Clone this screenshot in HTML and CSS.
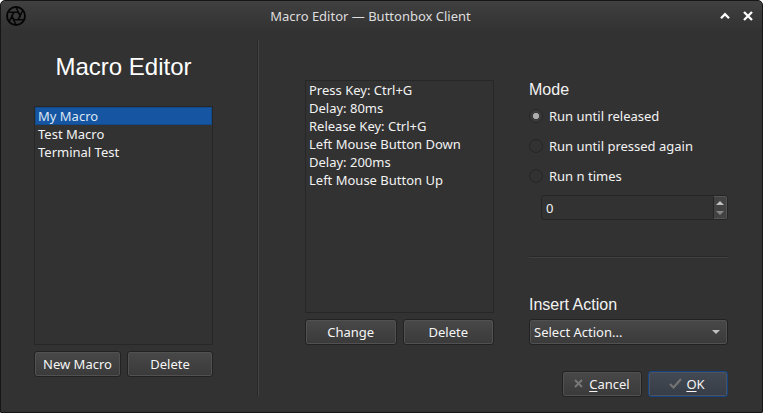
FILE: index.html
```html
<!DOCTYPE html>
<html lang="en">
<head>
<meta charset="utf-8">
<title>Macro Editor — Buttonbox Client</title>
<link rel="stylesheet" href="styles.css">
</head>
<body>
<div class="window">
  <header class="titlebar">
    <svg class="app-icon" viewBox="0 0 20 20" fill="none" stroke="#050505">
      <circle cx="10" cy="10" r="9" stroke-width="1.9"/>
      <path stroke-width="1.5" d="M8 6.2H12L14.3 10 12 13.8H8L5.7 10ZM12 6.2H3.2M14.3 10 10.2 1.5M12 13.8 16.7 4.5M8 13.8H16.8M5.7 10 9.8 18.5M8 6.2 3.3 15.5"/>
    </svg>
    <h1 class="window-title">Macro Editor — Buttonbox Client</h1>
    <div class="window-controls">
      <svg width="10" height="10" viewBox="0 0 10 10"><path d="M1 7.2 5 3.2 9 7.2"/></svg>
      <svg width="10" height="10" viewBox="0 0 10 10"><path d="M1 1 9 9M9 1 1 9"/></svg>
    </div>
  </header>
  <main class="content">
    <section class="macros">
      <h2 class="heading">Macro Editor</h2>
      <ul class="list">
        <li class="selected">My Macro</li>
        <li>Test Macro</li>
        <li>Terminal Test</li>
      </ul>
      <div class="buttons">
        <button class="button new">New Macro</button>
        <button class="button">Delete</button>
      </div>
    </section>
    <div class="divider"></div>
    <section class="actions">
      <ul class="list">
        <li>Press Key: Ctrl+G</li>
        <li>Delay: 80ms</li>
        <li>Release Key: Ctrl+G</li>
        <li>Left Mouse Button Down</li>
        <li>Delay: 200ms</li>
        <li>Left Mouse Button Up</li>
      </ul>
      <div class="buttons">
        <button class="button">Change</button>
        <button class="button">Delete</button>
      </div>
    </section>
    <section class="settings">
      <h3 class="subheading">Mode</h3>
      <div class="radios">
        <div class="radio"><span class="dot checked"></span>Run until released</div>
        <div class="radio"><span class="dot"></span>Run until pressed again</div>
        <div class="radio"><span class="dot"></span>Run n times</div>
      </div>
      <div class="spinbox">
        <span class="value">0</span>
        <div class="steppers">
          <svg width="8" height="4" viewBox="0 0 8 4"><path fill="#c0c0c0" d="M0 4 4 0 8 4Z"/></svg>
          <svg width="8" height="4" viewBox="0 0 8 4"><path fill="#858585" d="M0 0 4 4 8 0Z"/></svg>
        </div>
      </div>
      <div class="rule"></div>
      <h3 class="subheading">Insert Action</h3>
      <div class="button combo">Select Action...
        <svg width="8" height="4" viewBox="0 0 8 4"><path fill="#c0c0c0" d="M0 0 4 4 8 0Z"/></svg>
      </div>
      <div class="dialog-buttons">
        <button class="button"><svg width="9" height="9" viewBox="0 0 9 9"><path d="M1 1 8 8M8 1 1 8" fill="none" stroke="#777" stroke-width="2"/></svg><span><u>C</u>ancel</span></button>
        <button class="button primary"><svg width="13" height="11" viewBox="0 0 13 11"><path d="M1 6 4.5 9.5 12 1" fill="none" stroke="#737373" stroke-width="2.2"/></svg><span><u>O</u>K</span></button>
      </div>
    </section>
  </main>
</div>
</body>
</html>
```
FILE: styles.css
```css
* { box-sizing: border-box; }
body {
  margin: 0;
  background: #fff;
  color: #f2f2f2;
  font: 13px/18px "Noto Sans", sans-serif;
}
h1, h2, h3, ul { margin: 0; padding: 0; font-weight: 400; list-style: none; }
svg { display: block; flex: none; }
.window {
  width: 763px;
  height: 413px;
  border: 1px solid #161616;
  border-radius: 5px 5px 1px 1px;
  background: #323232 linear-gradient(#404040, #323232) no-repeat 0 0 / 100% 30px;
}
.titlebar {
  display: grid;
  grid-template-columns: 60px 1fr 60px;
  align-items: center;
  height: 30px;
}
.app-icon { width: 20px; height: 20px; margin: -1px 0 0 5px; }
.window-title {
  text-align: center;
  font-size: 13px;
  padding-right: 22px;
  color: #dedede;
}
.window-controls {
  display: flex;
  justify-content: flex-end;
  gap: 13px;
  padding-right: 9px;
}
.window-controls path { fill: none; stroke: #fcfcfc; stroke-width: 2.3; }
.content { display: flex; height: 381px; padding-left: 33px; }
.macros { width: 179px; padding-top: 18px; }
.heading {
  font: 24px/36px "Liberation Sans", sans-serif;
  text-align: center;
  color: #fff;
  margin-bottom: 21px;
}
.list { height: 239px; border: 1px solid #272727; }
.list li { height: 18px; padding-left: 3px; white-space: nowrap; }
.list .selected { background: #1655a2; color: #dce6f2; box-shadow: 0 0 0 1px #124989 inset; }
.buttons { display: flex; gap: 6px; margin-top: 6px; }
.buttons .button { flex: 1; }
.buttons .new { flex: 0 0 87px; }
.button {
  display: flex;
  align-items: center;
  justify-content: center;
  height: 26px;
  padding: 0 0 1px;
  border: 1px solid #222;
  border-radius: 3px;
  background: linear-gradient(#484848, #3a3a3a);
  box-shadow: inset 0 0 0 1px #515151;
  color: #f5f5f5;
  font: inherit;
}
.divider {
  width: 2px;
  height: 356px;
  margin: 9px 46px 0 44px;
  border-left: 1px solid #282828;
  border-right: 1px solid #444;
}
.actions { width: 189px; padding-top: 49px; }
.actions .list { height: 233px; }
.settings { width: 199px; margin-left: 35px; padding-top: 48px; }
.subheading { font: 16px/22px "Liberation Sans", sans-serif; }
.radios { display: grid; gap: 12px; margin-top: 6px; }
.radio { display: flex; align-items: center; gap: 6px; }
.dot {
  width: 14px;
  height: 14px;
  border: 1px solid #252525;
  border-radius: 50%;
}
.checked { background: radial-gradient(circle, #adadad 2.8px, #3a3a3a 3.5px); }
.spinbox {
  display: flex;
  height: 25px;
  margin: 10px 0 0 12px;
  border: 1px solid #252525;
  border-radius: 3px;
}
.value { flex: 1; padding: 3px 4px; }
.steppers {
  display: flex;
  flex-direction: column;
  align-items: center;
  justify-content: center;
  gap: 6px;
  width: 14px;
  border: 1px solid #555;
  border-left-color: #252525;
  border-radius: 0 2px 2px 0;
  background: #424242;
}
.rule { height: 2px; margin: 36px 0; border-top: 1px solid #282828; border-bottom: 1px solid #414141; }
.combo { justify-content: space-between; margin-top: 3px; padding: 0 7px 1px 4px; }
.dialog-buttons { display: flex; justify-content: flex-end; gap: 6px; margin-top: 26px; }
.dialog-buttons .button { width: 80px; gap: 6px; }
.dialog-buttons .primary { gap: 4px; padding-right: 2px; }
.primary { border-color: #164382; background: linear-gradient(#434a53, #363d46); box-shadow: inset 0 0 0 1px #4a535e; }
u { text-decoration-thickness: 1px; text-underline-offset: 2px; }
```
